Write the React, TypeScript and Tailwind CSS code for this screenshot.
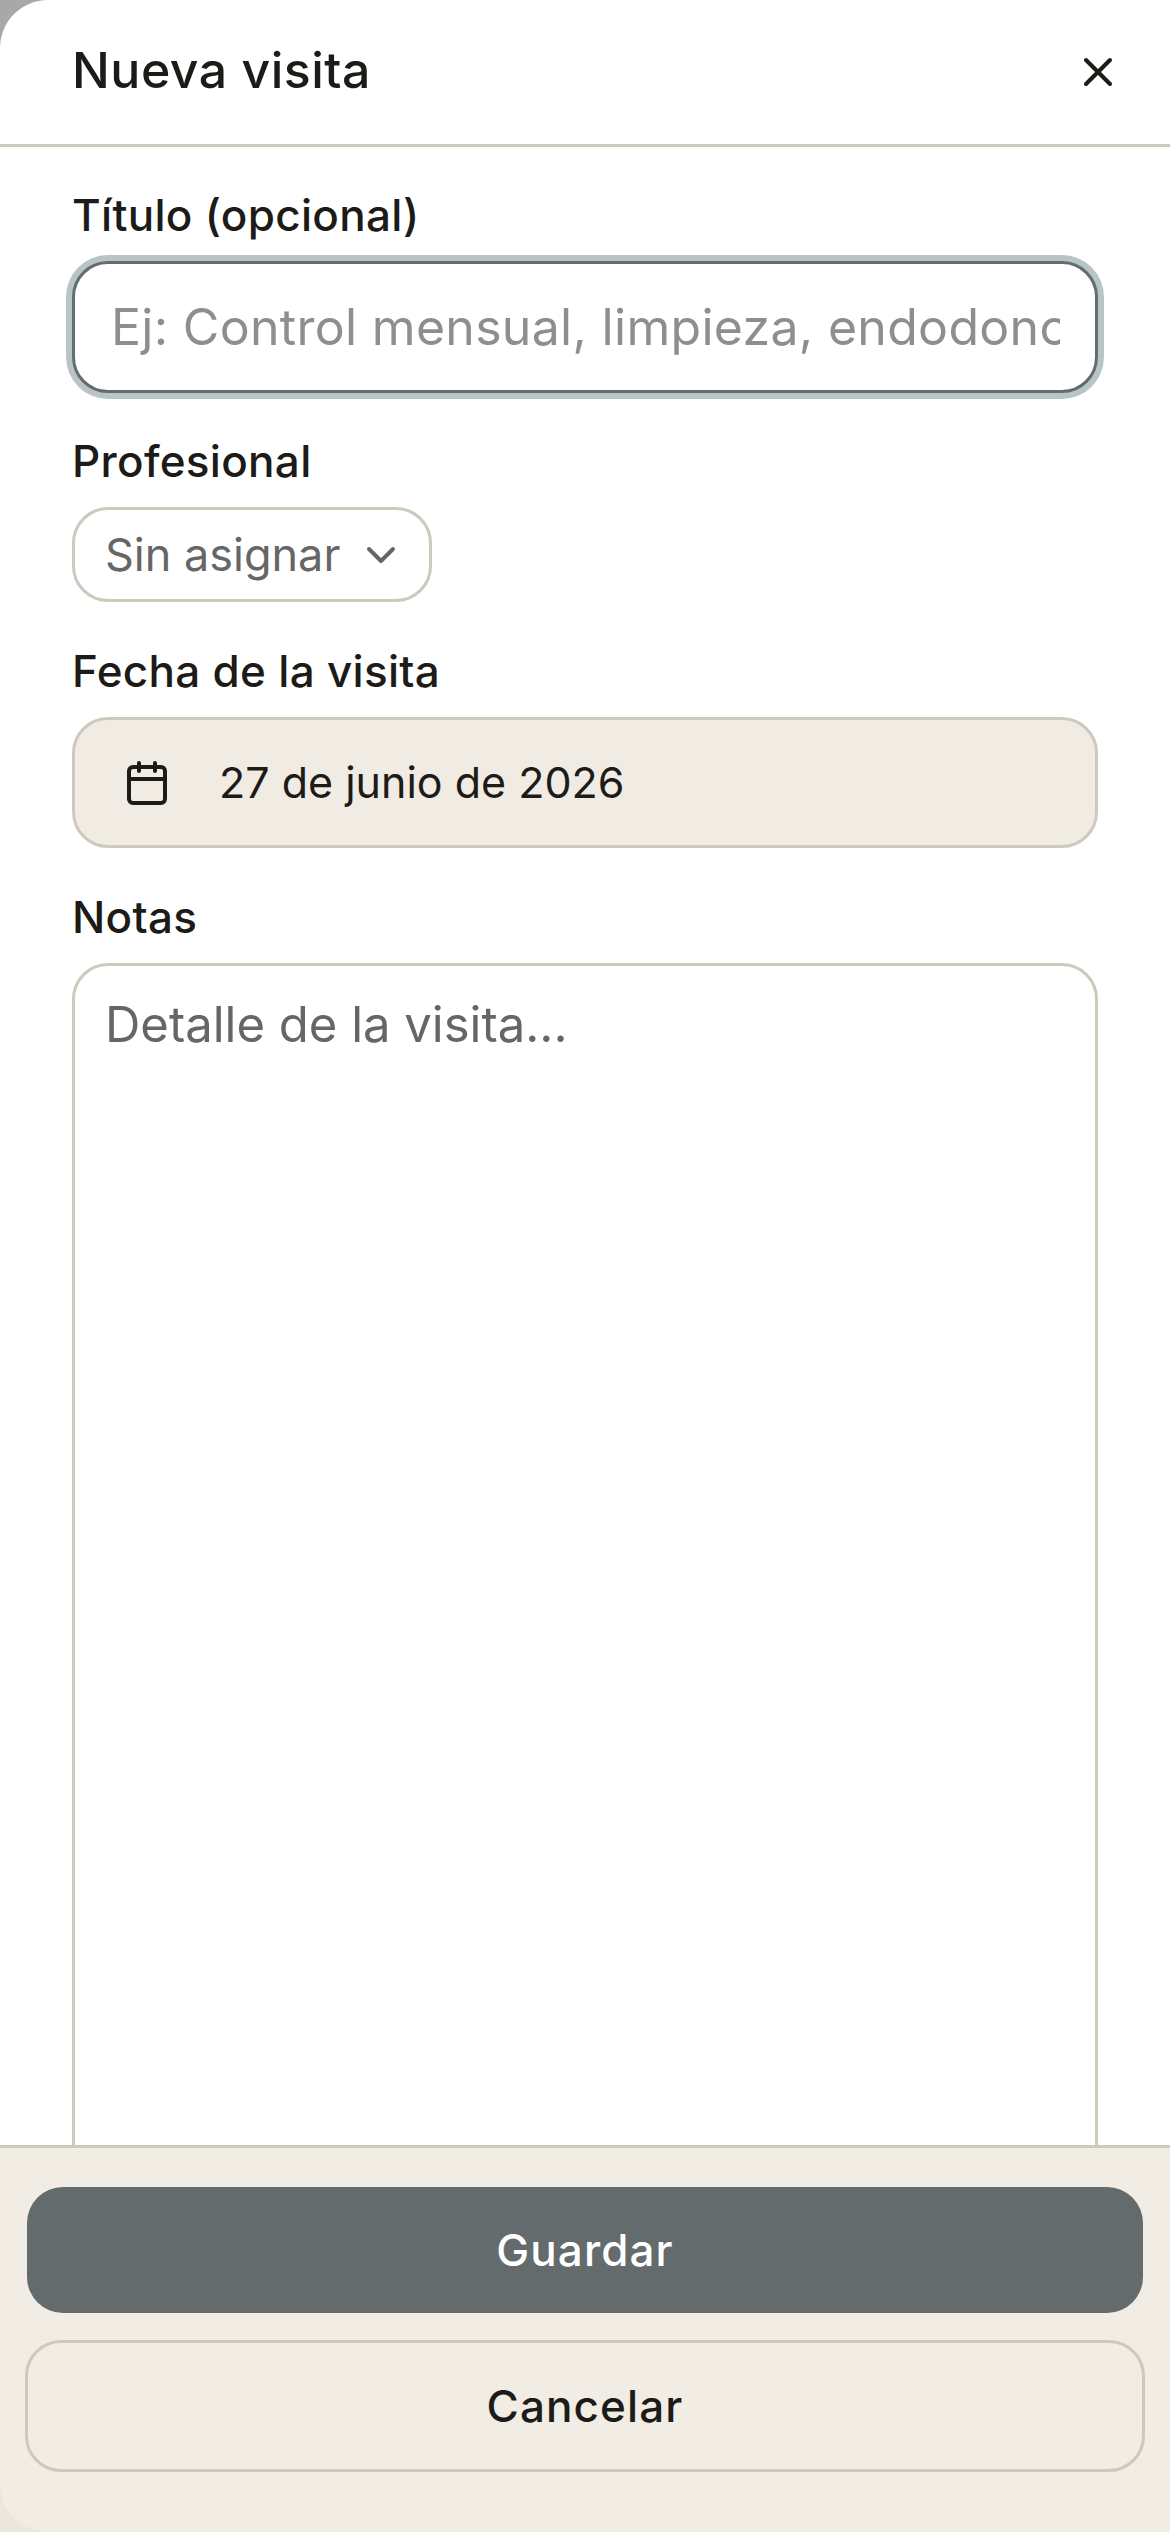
import { Calendar, ChevronDown, X } from 'lucide-react';

const labelClass = 'h-[60px] mb-[15px] pb-[2px] flex items-center text-[44px] tracking-[0.3px] font-medium text-[#1c1b18]';

export default function App() {
  return (
    <div className="w-[1170px] h-[2532px] bg-[#a8a8a8] overflow-hidden font-['Inter',sans-serif]">
      <div className="h-full flex flex-col bg-white rounded-tl-[48px] overflow-hidden">
        {/* Header */}
        <header className="h-[147px] shrink-0 flex items-center justify-between pl-[72px] pr-[48px] border-b-[3px] border-[#cdc9bd]">
          <h1 className="pb-[4px] text-[50px] tracking-[0.5px] font-medium text-[#1c1b18]">Nueva visita</h1>
          <button className="w-12 h-12 flex items-center justify-center text-[#1c1b18]">
            <X size={48} strokeWidth={2} />
          </button>
        </header>

        {/* Form */}
        <main className="flex-1 min-h-0 overflow-hidden px-[72px] pt-[39px]">
          <label className={labelClass}>Título (opcional)</label>
          <input
            placeholder="Ej: Control mensual, limpieza, endodoncia..."
            className="w-full h-[132px] pl-[36px] pr-[35px] text-[50px] tracking-[0.3px] bg-white rounded-[36px] border-[3px] border-[#646c6d] ring-[6px] ring-[#b9c4c4] outline-none placeholder:text-[#8e8e8e]"
          />

          <label className={`${labelClass} mt-[39px]`}>Profesional</label>
          <button className="w-[360px] h-[95px] pl-[30px] pr-[24px] flex items-center justify-between rounded-[36px] border-[3px] border-[#cdc9bd] text-[45px] text-[#666666]">
            <span>Sin asignar</span>
            <ChevronDown size={48} strokeWidth={2} />
          </button>

          <label className={`${labelClass} mt-[40px]`}>Fecha de la visita</label>
          <div className="h-[131px] pl-[48px] flex items-center gap-[48px] rounded-[36px] border-[3px] border-[#cdc9bd] bg-[#f0ebe3] text-[43px] text-[#1c1b18]">
            <Calendar size={48} strokeWidth={2} />
            <span>27 de junio de 2026</span>
          </div>

          <label className={`${labelClass} mt-[40px]`}>Notas</label>
          <textarea
            placeholder="Detalle de la visita..."
            className="block w-full h-[1400px] pt-[22px] px-[30px] text-[49px] resize-none rounded-[36px] border-[3px] border-[#cdc9bd] outline-none placeholder:text-[#666666]"
          />
        </main>

        {/* Footer */}
        <div className="shrink-0 bg-[#ebe7df]">
          <footer className="h-[387px] flex flex-col gap-[27px] px-[25px] pt-[39px] border-t-[3px] border-[#cdc9bd] bg-[#f1ece4] rounded-bl-[48px]">
            <button className="mx-[2px] h-[126px] shrink-0 rounded-[36px] bg-[#636b6c] text-[44px] tracking-[1.1px] font-medium text-white">
              Guardar
            </button>
            <button className="h-[132px] shrink-0 rounded-[36px] border-[3px] border-[#cdc9bd] text-[44px] tracking-[1.1px] font-medium text-[#1c1b18]">
              Cancelar
            </button>
          </footer>
        </div>
      </div>
    </div>
  );
}
